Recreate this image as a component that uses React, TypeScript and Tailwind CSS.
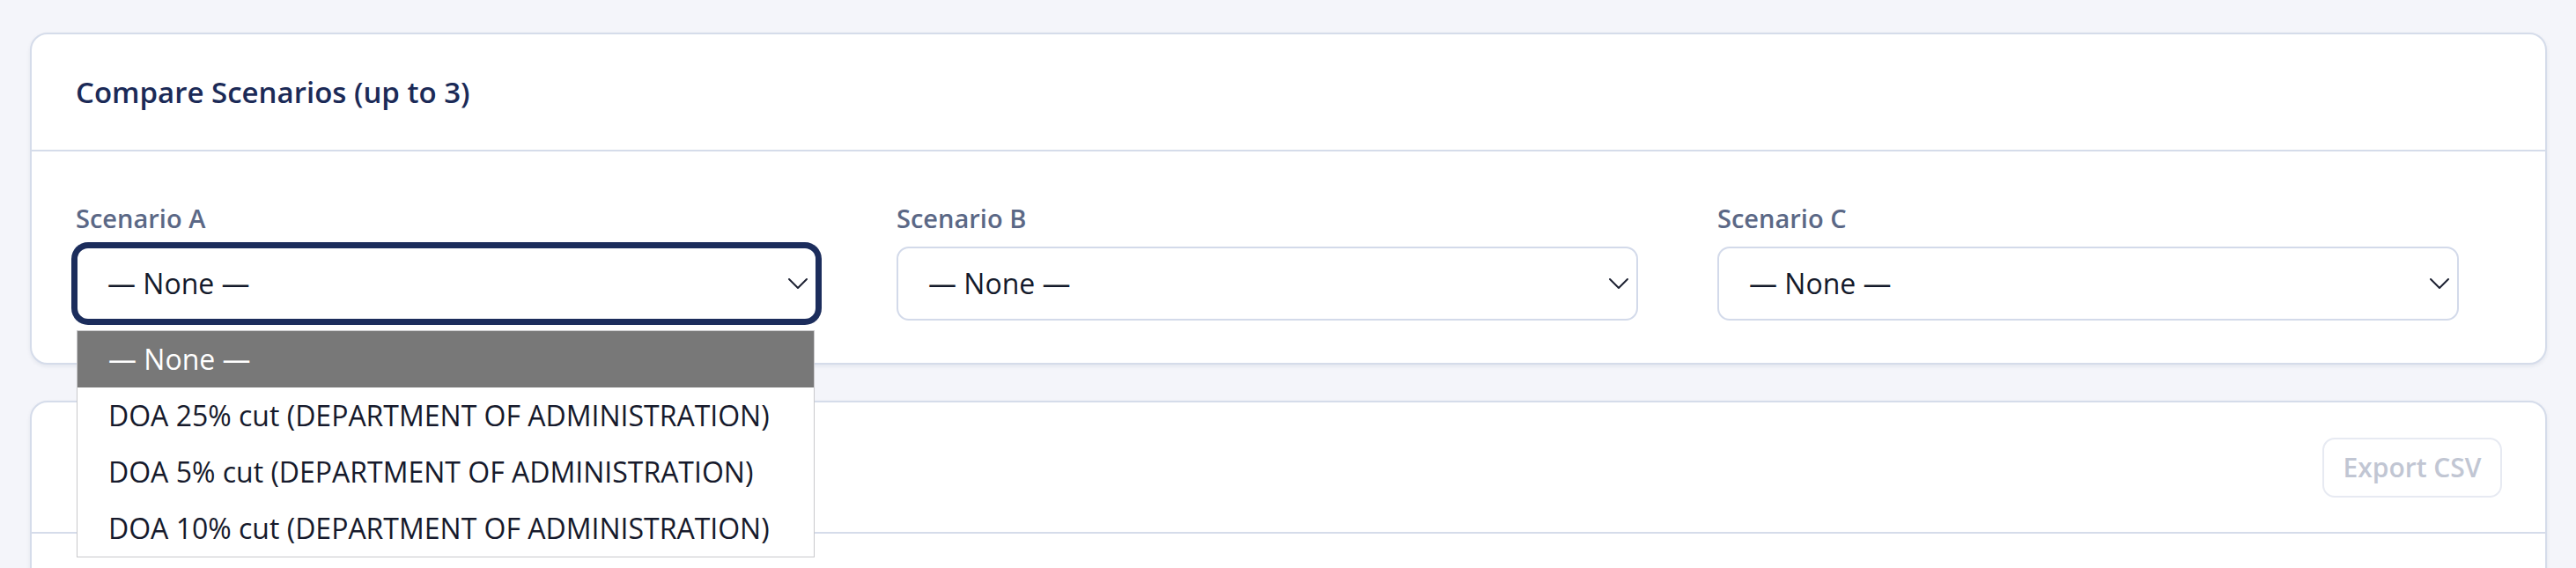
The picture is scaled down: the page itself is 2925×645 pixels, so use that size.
import { ChevronDown } from "lucide-react";

const OPTIONS = [
  "— None —",
  "DOA 25% cut (DEPARTMENT OF ADMINISTRATION)",
  "DOA 5% cut (DEPARTMENT OF ADMINISTRATION)",
  "DOA 10% cut (DEPARTMENT OF ADMINISTRATION)",
];

function ScenarioSelect({ label, open }: { label: string; open?: boolean }) {
  return (
    <div className="relative flex flex-col">
      <label className="mb-[12px] text-[29px] leading-[40px] font-semibold text-[#5b6886]">{label}</label>
      <div className="relative">
        <select
          defaultValue=""
          className={`h-[84px] w-full appearance-none rounded-[14px] bg-white pl-[34px] text-[32px] text-[#141a2b] outline-none ${
            open ? "border-2 border-[#1c2d5c] ring-[5px] ring-[#1c2d5c]" : "border-2 border-[#d3daea]"
          }`}
        >
          <option value="">— None —</option>
        </select>
        <ChevronDown
          className="pointer-events-none absolute right-[2px] top-1/2 size-[40px] -translate-y-1/2 text-[#1e2233]"
          strokeWidth={1.2}
        />
      </div>

      {open && (
        <ul className="absolute top-[147px] left-[1px] z-20 w-[838px] border border-[#c9c9cc] bg-white">
          {OPTIONS.map((o, i) => (
            <li
              key={o}
              className={`flex h-[64px] items-center pl-[35px] text-[32px] ${
                i === 0 ? "bg-[#787878] text-white" : "text-[#161a2c]"
              }`}
            >
              {o}
            </li>
          ))}
        </ul>
      )}
    </div>
  );
}

export default function App() {
  return (
    <div className="h-screen overflow-hidden bg-[#f4f5fa] pt-[37px] pl-[34px] pr-[33px] [font-family:'Open_Sans',sans-serif]">
      {/* Compare card */}
      <section className="rounded-[20px] border-2 border-[#d5dcea] bg-white shadow-[0_2px_4px_rgba(30,45,90,0.08)]">
        <div className="flex h-[133px] items-center border-b-2 border-[#d5dcea] pl-[50px]">
          <h2 className="text-[33px] leading-[48px] font-semibold text-[#1b2a57]">Compare Scenarios (up to 3)</h2>
        </div>
        <div className="pt-[56px] pb-[48px] pl-[50px]">
          <div className="grid grid-cols-[842px_842px_842px] gap-x-[90px]">
            <ScenarioSelect label="Scenario A" open />
            <ScenarioSelect label="Scenario B" />
            <ScenarioSelect label="Scenario C" />
          </div>
        </div>
      </section>

      {/* Results card */}
      <section className="mt-[41px] h-[300px] rounded-[20px] border-2 border-[#d5dcea] bg-white shadow-[0_2px_4px_rgba(30,45,90,0.08)]">
        <div className="flex h-[149px] items-center justify-end border-b-2 border-[#d5dcea] pr-[49px]">
          <button
            disabled
            className="h-[68px] w-[204px] rounded-[14px] border-2 border-[#e7eaf2] bg-white text-[30px] font-semibold text-[#c1c6d3]"
          >
            Export CSV
          </button>
        </div>
      </section>
    </div>
  );
}
